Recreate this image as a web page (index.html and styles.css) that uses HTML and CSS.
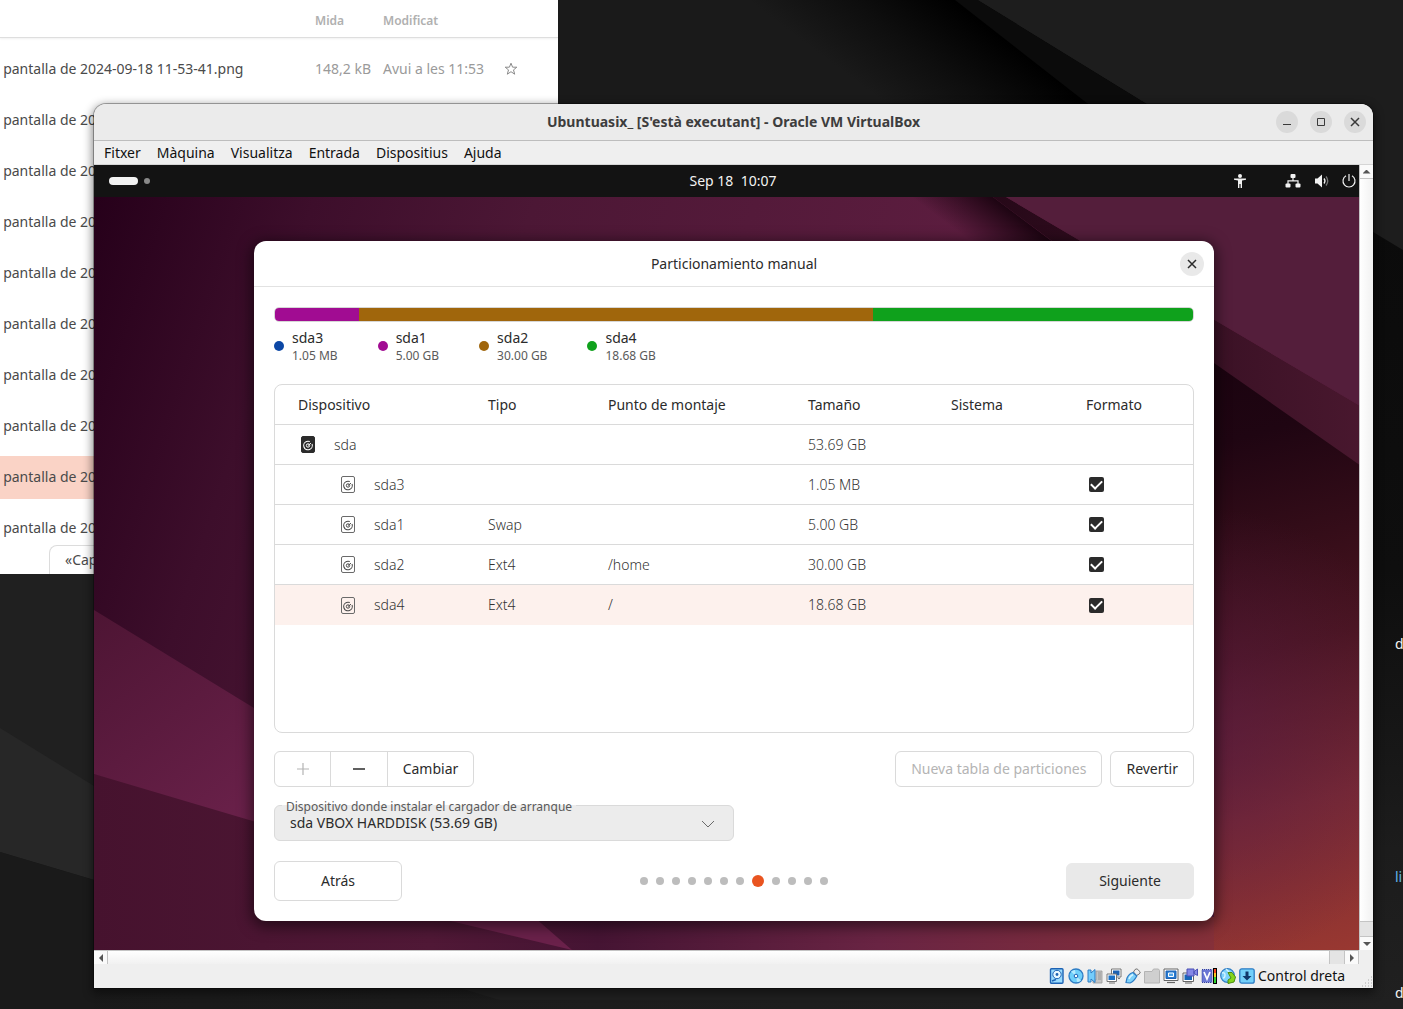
FILE: index.html
```html
<!DOCTYPE html>
<html lang="ca">
<head>
<meta charset="utf-8">
<title>Ubuntuasix_ - Oracle VM VirtualBox</title>
<link rel="stylesheet" href="styles.css">
</head>
<body>
<svg class="defs" aria-hidden="true">
  <symbol id="disk" viewBox="2 3 12 15">
    <circle cx="8" cy="11.500" r="4.300" fill="none" stroke="currentColor" stroke-width="1.100" stroke-dasharray="23 4" transform="rotate(-20 8 11.500)"/>
    <circle cx="8" cy="11.500" r="1.700" fill="none" stroke="currentColor"/>
    <path d="M8 11.500L11 9.200" stroke="currentColor"/>
  </symbol>
  <symbol id="close" viewBox="0 0 16 16"><path d="M4 4l8 8M12 4l-8 8" stroke="currentColor" stroke-width="1.500"/></symbol>
</svg>
<main class="desktop">
  <svg class="wallpaper" viewBox="0 0 1403 1009" preserveAspectRatio="none" aria-hidden="true">
    <defs>
      <linearGradient id="d1" gradientUnits="userSpaceOnUse" x1="947" y1="150" x2="1021" y2="52"><stop offset="0" stop-color="#1a1a1a"/><stop offset=".5" stop-color="#0e0e0e"/><stop offset="1" stop-color="#000"/></linearGradient>
      <linearGradient id="d2" x1="0" y1="0" x2="0" y2="1"><stop offset="0" stop-color="#0b0b0b"/><stop offset=".45" stop-color="#0e0e0e"/><stop offset=".8" stop-color="#1c1c1c"/><stop offset="1" stop-color="#202020"/></linearGradient>
      <linearGradient id="d3" x1="0" y1="0" x2="1" y2="0"><stop offset="0" stop-color="#191919"/><stop offset="1" stop-color="#202020"/></linearGradient>
    </defs>
    <rect width="1403" height="1009" fill="#202020"/>
    <path d="M558 0H978L1147 104H558z" fill="url(#d1)"/>
    <path d="M955 0H978L1147 104H1088z" fill="#0b0b0b"/>
    <path d="M978 0H1403V300L1147 104z" fill="#1d1d1d"/>
    <path d="M1340 212L1403 250V1009H1340z" fill="url(#d2)"/>
    <path d="M0 728L94 786V885H0z" fill="#272727"/>
    <path d="M0 852L500 1000H1403V1009H0z" fill="url(#d3)"/>
    <path d="M0 852L94 880V1009H0z" fill="#1a1a1a"/>
  </svg>

  <div class="desk-labels"><span>d</span><a class="link" href="#li">li</a><span>d</span></div>

  <section class="files">
    <div class="files-head"><span></span><span>Mida</span><span>Modificat</span></div>
    <ul class="files-list">
      <li><span class="name">Captura de pantalla de 2024-09-18 11-53-41.png</span><span class="dim">148,2 kB</span><span class="dim">Avui a les 11:53</span>
        <svg class="star" viewBox="0 0 14 14"><path d="M7 1.200l1.600 4h4.200L9.500 7.900l1.200 4.300L7 9.700l-3.700 2.500 1.200-4.300L1.200 5.200h4.200z" fill="none" stroke="#8a8a8a"/></svg></li>
      <li><span class="name">Captura de pantalla de 2024</span></li>
      <li><span class="name">Captura de pantalla de 2024</span></li>
      <li><span class="name">Captura de pantalla de 2024</span></li>
      <li><span class="name">Captura de pantalla de 2024</span></li>
      <li><span class="name">Captura de pantalla de 2024</span></li>
      <li><span class="name">Captura de pantalla de 2024</span></li>
      <li><span class="name">Captura de pantalla de 2024</span></li>
      <li class="picked"><span class="name">Captura de pantalla de 2024</span></li>
      <li><span class="name">Captura de pantalla de 2024</span></li>
    </ul>
    <div class="files-status">«Captura</div>
  </section>

  <section class="vm">
    <header class="vm-title">
      <h1>Ubuntuasix_ [S'està executant] - Oracle VM VirtualBox</h1>
      <div class="win-buttons">
        <button aria-label="Minimitza"><svg viewBox="0 0 16 16"><path d="M4 10.500h8" stroke="currentColor"/></svg></button>
        <button aria-label="Maximitza"><svg viewBox="0 0 16 16"><path d="M4.500 4.500h7v7h-7z" fill="none" stroke="currentColor"/></svg></button>
        <button aria-label="Tanca"><svg viewBox="0 0 16 16"><use href="#close"/></svg></button>
      </div>
    </header>
    <nav class="vm-menu"><a href="#f">Fitxer</a><a href="#m">Màquina</a><a href="#v">Visualitza</a><a href="#e">Entrada</a><a href="#d">Dispositius</a><a href="#a">Ajuda</a></nav>

    <div class="vm-view">
      <div class="guest-clip">
        <div class="guest">
          <div class="topbar">
            <div class="workspaces"><i class="pill"></i><i class="dot"></i></div>
            <time>Sep 18&nbsp; 10:07</time>
            <div class="tray">
              <svg class="a11y" viewBox="0 0 16 16" fill="#f2f2f2"><circle cx="8" cy="3" r="2"/><path d="M2 5.500h12v1.300l-4 .7V15H8.600v-4H7.400v4H6V7.500L2 6.800z"/></svg>
              <svg viewBox="0 0 16 16" fill="#f2f2f2"><rect x="5.500" y="1" width="5" height="4" rx="1"/><rect x=".5" y="10.500" width="5" height="4" rx="1"/><rect x="10.500" y="10.500" width="5" height="4" rx="1"/><path d="M8 5v3M3 11V7.800h10V11" fill="none" stroke="#f2f2f2" stroke-width="1.200"/></svg>
              <svg viewBox="0 0 16 16" fill="#f2f2f2"><path d="M2 5.500h2.500L9 1.500v13l-4.500-4H2z"/><path d="M11 5.500q2 2.500 0 5" fill="none" stroke="#f2f2f2" stroke-width="1.300"/><path d="M13 3.500q3.500 4.500 0 9" fill="none" stroke="#777" stroke-width="1.300"/></svg>
              <svg viewBox="0 0 16 16" fill="none" stroke="#f2f2f2" stroke-width="1.200"><path d="M5 2.800a6 6 0 1 0 6 0M8 1v7"/></svg>
            </div>
          </div>
          <div class="guest-desk">
            <svg class="wallpaper" viewBox="0 0 1280 753" preserveAspectRatio="none" aria-hidden="true">
              <defs>
                <linearGradient id="g1" gradientUnits="userSpaceOnUse" x1="0" y1="0" x2="800" y2="260"><stop offset="0" stop-color="#26001a"/><stop offset=".25" stop-color="#3d0e2b"/><stop offset=".5" stop-color="#4c1735"/><stop offset="1" stop-color="#5c1d3f"/></linearGradient>
                <linearGradient id="g2" gradientUnits="userSpaceOnUse" x1="900" y1="62" x2="930" y2="22"><stop offset="0" stop-color="#1c0411" stop-opacity="0"/><stop offset="1" stop-color="#1c0411"/></linearGradient>
                <linearGradient id="g3" gradientUnits="userSpaceOnUse" x1="1100" y1="150" x2="1265" y2="753"><stop offset="0" stop-color="#1a030f"/><stop offset=".16" stop-color="#1f0512"/><stop offset=".5" stop-color="#48141f"/><stop offset=".75" stop-color="#792a33"/><stop offset="1" stop-color="#993831"/></linearGradient>
                <linearGradient id="g4" gradientUnits="userSpaceOnUse" x1="0" y1="0" x2="1120" y2="0"><stop offset="0" stop-color="#46122e"/><stop offset=".3" stop-color="#501836"/><stop offset=".45" stop-color="#451433"/><stop offset=".7" stop-color="#692443"/><stop offset="1" stop-color="#853039"/></linearGradient>
                <linearGradient id="g5" gradientUnits="userSpaceOnUse" x1="0" y1="420" x2="160" y2="620"><stop offset="0" stop-color="#4e1534"/><stop offset="1" stop-color="#6a214a"/></linearGradient>
                <radialGradient id="g6" gradientUnits="userSpaceOnUse" cx="1110" cy="540" r="230"><stop offset="0" stop-color="#5a1c46" stop-opacity=".6"/><stop offset="1" stop-color="#5a1c46" stop-opacity="0"/></radialGradient>
                <linearGradient id="g7" x1="0" y1="0" x2="1" y2="0"><stop offset="0" stop-color="#260818"/><stop offset="1" stop-color="#4a182f"/></linearGradient>
              </defs>
              <rect width="1280" height="753" fill="url(#g1)"/>
              <path d="M0 577L600 720H1130V753H0z" fill="url(#g4)"/>
              <path d="M0 413L250 566V651L0 577z" fill="url(#g5)"/>
              <path d="M340 720H440L478 753z" fill="#6a214a"/>
              <path d="M780 0H899L1120 166H780z" fill="url(#g2)"/>
              <path d="M1120 150L1280 270V753H1120z" fill="url(#g3)"/>
              <path d="M1120 300H1280V753H1120z" fill="url(#g6)"/>
              <path d="M899 0H912L1280 217V278L1120 166L958 44z" fill="url(#g7)"/>
              <path d="M912 0H1280V217z" fill="#541e3b"/>
            </svg>

            <section class="dialog">
              <header class="dialog-head"><h2>Particionamiento manual</h2><button aria-label="Cerrar"><svg viewBox="0 0 16 16"><use href="#close"/></svg></button></header>
              <div class="dialog-body">
                <div class="usage"><i class="violet"></i><i class="brown"></i><i class="green"></i></div>
                <ul class="legend">
                  <li><i class="blue"></i><div><b>sda3</b><small>1.05 MB</small></div></li>
                  <li><i class="violet"></i><div><b>sda1</b><small>5.00 GB</small></div></li>
                  <li><i class="brown"></i><div><b>sda2</b><small>30.00 GB</small></div></li>
                  <li><i class="green"></i><div><b>sda4</b><small>18.68 GB</small></div></li>
                </ul>
                <div class="table-box">
                  <table>
                    <colgroup><col class="c-dev"><col class="c-type"><col class="c-mount"><col class="c-size"><col class="c-sys"><col></colgroup>
                    <thead><tr><th>Dispositivo</th><th>Tipo</th><th>Punto de montaje</th><th>Tamaño</th><th>Sistema</th><th>Formato</th></tr></thead>
                    <tbody>
                      <tr><td><div class="dev"><svg class="drive solid"><use href="#disk"/></svg>sda</div></td><td></td><td></td><td>53.69 GB</td><td></td><td></td></tr>
                      <tr><td><div class="dev child"><svg class="drive"><use href="#disk"/></svg>sda3</div></td><td></td><td></td><td>1.05 MB</td><td></td><td><input type="checkbox" checked aria-label="Formato sda3"></td></tr>
                      <tr><td><div class="dev child"><svg class="drive"><use href="#disk"/></svg>sda1</div></td><td>Swap</td><td></td><td>5.00 GB</td><td></td><td><input type="checkbox" checked aria-label="Formato sda1"></td></tr>
                      <tr><td><div class="dev child"><svg class="drive"><use href="#disk"/></svg>sda2</div></td><td>Ext4</td><td>/home</td><td>30.00 GB</td><td></td><td><input type="checkbox" checked aria-label="Formato sda2"></td></tr>
                      <tr class="current"><td><div class="dev child"><svg class="drive"><use href="#disk"/></svg>sda4</div></td><td>Ext4</td><td>/</td><td>18.68 GB</td><td></td><td><input type="checkbox" checked aria-label="Formato sda4"></td></tr>
                    </tbody>
                  </table>
                </div>
                <div class="actions">
                  <div class="group">
                    <button disabled aria-label="Añadir"><svg viewBox="0 0 16 16"><path d="M2 8h12M8 2v12" stroke="currentColor" stroke-width="1.200"/></svg></button>
                    <button aria-label="Quitar"><svg viewBox="0 0 16 16"><path d="M2 8h12" stroke="currentColor" stroke-width="1.500"/></svg></button>
                    <button>Cambiar</button>
                  </div>
                  <button class="btn push" disabled>Nueva tabla de particiones</button>
                  <button class="btn">Revertir</button>
                </div>
                <div class="field">
                  <label for="boot">Dispositivo donde instalar el cargador de arranque</label>
                  <select id="boot"><option>sda VBOX HARDDISK (53.69 GB)</option></select>
                  <svg class="chevron" viewBox="0 0 14 8"><path d="M1 1l6 6 6-6" fill="none" stroke="#6a6a6a"/></svg>
                </div>
                <footer class="dialog-foot">
                  <button class="btn wide">Atrás</button>
                  <div class="steps"><i></i><i></i><i></i><i></i><i></i><i></i><i></i><i class="on"></i><i></i><i></i><i></i><i></i></div>
                  <button class="btn wide next">Siguiente</button>
                </footer>
              </div>
            </section>
          </div>
        </div>
      </div>
      <div class="vscroll"><i class="arrow up"></i><i class="track"></i><i class="thumb"></i><i class="arrow down"></i></div>
      <div class="hscroll"><i class="arrow left"></i><i class="track"></i><i class="thumb"></i><i class="arrow right"></i></div>
    </div>

    <footer class="vm-status">
      <svg viewBox="0 0 16 16"><rect x="1.500" y=".8" width="12.500" height="14.400" rx="1" fill="#9adcff" stroke="#1d62b4" stroke-width="1.400"/><circle cx="8" cy="6.500" r="4.200" fill="#e8f8ff" stroke="#1d62b4"/><circle cx="8" cy="6.500" r="1.400" fill="#1d62b4"/><path d="M3 13l4-1.500" stroke="#1d62b4" stroke-width="1.600"/></svg>
      <svg viewBox="0 0 16 16"><circle cx="8" cy="8" r="7" fill="#6fd0fb" stroke="#2d7cc4" stroke-width="1.300"/><path d="M8 8L3 3.500A6 6 0 0 1 7 2zM8 8l5 4.500a6 6 0 0 1-4 1.500z" fill="#b5ebff"/><circle cx="8" cy="8" r="1.800" fill="#fff" stroke="#1d62b4"/></svg>
      <svg viewBox="0 0 16 16"><path d="M9 3h6v12H6v-3h3z" fill="#c4c4c4" stroke="#999" stroke-width=".8"/><path d="M11 5h3M11 7h3M11 9h3M11 11h3" stroke="#888" stroke-width=".7"/><path d="M1 2h3v3l4-3.500v13L4 11v3H1z" fill="#75cdfb" stroke="#2d7cc4"/></svg>
      <svg viewBox="0 0 16 16"><path d="M5.500 1h9.500v8H5.500z" fill="#fff" stroke="#777"/><path d="M7 2.500h6.500v5H7z" fill="#1d62b4"/><path d="M1 6h9.500v7.500H1z" fill="#fff" stroke="#777"/><path d="M2.500 7.500H9V12H2.500z" fill="#1d72c8"/><path d="M3 15h6M12 10.500h2" stroke="#777"/></svg>
      <svg viewBox="0 0 16 16"><path d="M10 1.500L12 .8 15.300 4l-1 2-2.800 1.500L8.500 4z" fill="#eee" stroke="#777"/><path d="M8 4.500L11.800 8Q9 13.500 5 15L1 14.500 2 10Q4 5.500 8 4.500z" fill="#7dd2fb" stroke="#2d7cc4" stroke-width="1.200"/><path d="M4 11q1-3 4-4.500" fill="none" stroke="#d8f5ff" stroke-width="1.500"/></svg>
      <svg viewBox="0 0 16 16"><path d="M.5 3.500L8 3.500 9.500 1h5l1 1.500V15H.5z" fill="#cfcfcf" stroke="#b4b4b4"/></svg>
      <svg viewBox="0 0 16 16"><path d="M1 1h14v11.500H1z" fill="#fff" stroke="#666"/><path d="M3 3h10v7.500H3z" fill="#2478cf" stroke="#1d62b4"/><path d="M5.500 5h5v3.500h-5z" fill="#4fa4ea" stroke="#fff"/><path d="M4 14.500h8" stroke="#666" stroke-width="1.200"/></svg>
      <svg viewBox="0 0 16 16"><path d="M1 5h10.500v8.500H1z" fill="#fff" stroke="#666"/><path d="M2.500 6.500H10V12H2.500z" fill="#1766b8"/><path d="M3 15h7" stroke="#666"/><path d="M5 1h7v7H5zM12 3.500L15.500 1v6.500L12 5.500z" fill="#8488e6" stroke="#4b4fb4"/></svg>
      <svg viewBox="0 0 16 16"><rect x="1" y="1.500" width="10" height="13" fill="#6a76d4"/><rect x="1" y="1.500" width="10" height="13" fill="none" stroke="#3341a0" stroke-dasharray="1 1"/><path d="M3 4l3 7 3-7" fill="none" stroke="#fff" stroke-width="1.700"/><path d="M12 0h4v16h-4z" fill="#000"/><path d="M13 1h2v4h-2z" fill="#f4471d"/><path d="M13 5h2v4h-2z" fill="#f7c81e"/><path d="M13 9h2v6h-2z" fill="#2ed32e"/></svg>
      <svg viewBox="0 0 16 16"><circle cx="7.500" cy="7.500" r="6.800" fill="#7dd2fb" stroke="#2d7cc4" stroke-width="1.200"/><path d="M2 5q3-1 3 2t-2 3M6 1l3 3" fill="none" stroke="#d5f3ff" stroke-width="1.400"/><path d="M8 4.500h4L15.500 9l-1.500 5-6 1.500V12l3-2z" fill="#83d51c" stroke="#4b8c10"/></svg>
      <svg viewBox="0 0 16 16"><rect x=".8" y=".8" width="14.400" height="14.400" rx="2" fill="#73d0fa" stroke="#2d7cc4" stroke-width="1.300"/><path d="M6.500 3.500h3V8h3L8 12.500 3.500 8h3z" fill="#10386b"/></svg>
      <span>Control dreta</span>
      <svg class="grip" viewBox="0 0 12 12"><path d="M10 1h1M7 4h1M10 4h1M4 7h1M7 7h1M10 7h1M1 10h1M4 10h1M7 10h1M10 10h1" stroke="#aaa"/></svg>
    </footer>
  </section>
</main>
</body>
</html>
```
FILE: styles.css
```css
* { box-sizing: border-box; }
body { margin: 0; background: #202020; font: 14px/20px "Noto Sans", "Open Sans", sans-serif; color: #2b2b2b; }
h1, h2, ul { margin: 0; padding: 0; list-style: none; }
button, select { font: inherit; color: inherit; margin: 0; padding: 0; border: 0; background: none; }
a { color: inherit; text-decoration: none; }
svg { display: block; }
.defs { position: absolute; width: 0; height: 0; }

.desktop { position: relative; height: 100vh; min-height: 600px; overflow: hidden; }
.wallpaper { position: absolute; inset: 0; width: 100%; height: 100%; }

.desk-labels { position: absolute; top: 634px; right: 0; width: 8px; overflow: hidden; color: #f2f2f2; display: grid; grid-template-rows: 233px 116px 20px; }
.desk-labels .link { color: #62b8e8; }

/* file manager behind the VM */
.files { position: absolute; left: 0; top: 0; width: 558px; height: 574px; overflow: hidden; background: #fff; color: #4a4a4a; }
.files-head, .files-list li { display: grid; grid-template-columns: 315px 68px 121px 16px; align-items: center; }
.files-head { height: 38px; padding-top: 4px; border-bottom: 1px solid #dedede; box-shadow: 0 1px 2px #0000000f; font-size: 12px; font-weight: 600; color: #b0b0b0; }
.files-list { display: grid; gap: 8px; padding-top: 10px; }
.files-list li { height: 43px; padding-bottom: 1px; white-space: nowrap; }
.files-list .picked { background: #fad3c6; }
.name { margin-left: -73px; }
.dim { color: #9a9a9a; }
.star { width: 14px; height: 14px; }
.files-status { position: absolute; left: 49px; bottom: 0; width: 500px; height: 29px; padding: 4px 15px; background: #fff; border: 1px solid #dcdcdc; border-bottom: 0; border-radius: 8px 8px 0 0; }

/* VirtualBox window */
.vm { position: absolute; left: 94px; top: 104px; right: 30px; bottom: 21px; display: flex; flex-direction: column; background: #efefef; border-radius: 12px 12px 0 0; overflow: hidden; box-shadow: 0 0 0 1px #0000004d, 0 3px 10px 2px #00000073; }
.vm-title { display: grid; grid-template-columns: 1fr auto 1fr; align-items: center; height: 37px; padding: 0 6px; background: #ebebeb; border-bottom: 1px solid #bdbdbd; }
.vm-title h1 { grid-column: 2; font-size: 14px; font-weight: 700; color: #3d3d3d; }
.win-buttons { display: flex; justify-content: flex-end; gap: 12px; color: #3a3a3a; padding-right: 1px; }
.win-buttons button, .dialog-head button { display: grid; place-items: center; width: 22px; height: 22px; border-radius: 50%; background: #dadada; }
.win-buttons svg, .dialog-head svg { width: 16px; height: 16px; }
.vm-menu { display: flex; gap: 16px; height: 24px; padding: 2px 10px; border-bottom: 1px solid #d5d5d5; color: #111; }
.vm-view { flex: 1; min-height: 0; display: grid; grid-template: minmax(0, 1fr) 14px / minmax(0, 1fr) 14px; }
.guest-clip { overflow: hidden; }
.guest { display: flex; flex-direction: column; width: calc(100% + 15px); height: 100%; }
.topbar { display: grid; grid-template-columns: 1fr auto 1fr; align-items: center; height: 32px; padding: 0 17px 0 15px; background: #131313; color: #f2f2f2; }
.workspaces { display: flex; align-items: center; gap: 6px; }
.pill { width: 29px; height: 8px; border-radius: 4px; background: #f2f2f2; }
.dot { width: 6px; height: 6px; border-radius: 3px; background: #8a8a8a; }
.tray { display: flex; justify-content: flex-end; gap: 12px; }
.tray svg { width: 16px; height: 16px; }
.tray .a11y { margin-right: 25px; }
.guest-desk { position: relative; flex: 1; padding: 44px 160px 29px; overflow: hidden; background: #4c1735; }

/* installer dialog */
.dialog { position: relative; height: 100%; display: flex; flex-direction: column; background: #fff; border-radius: 12px; box-shadow: 0 3px 14px 3px #00000080; }
.dialog-head { display: grid; grid-template-columns: 1fr auto 1fr; align-items: center; height: 46px; padding: 0 10px; border-bottom: 1px solid #e2e2e2; }
.dialog-head h2 { grid-column: 2; font-size: 14px; font-weight: 400; }
.dialog-head button { justify-self: end; width: 24px; height: 24px; background: #e9e9e9; }
.dialog-body { flex: 1; display: flex; flex-direction: column; padding: 20px; }
.usage { display: flex; height: 15px; border: 1px solid #d6d6d6; border-radius: 5px; overflow: hidden; }
.usage .violet { flex: 84; }
.usage .brown { flex: 514; }
.usage .green { flex: 320; }
.blue { background: #0c47a5; }
.violet { background: #a10c92; }
.brown { background: #a0660c; }
.green { background: #0fa11c; }
.legend { display: flex; gap: 40px; margin: 6px 0 20px; }
.legend li { display: flex; align-items: center; gap: 8px; }
.legend i { width: 10px; height: 10px; border-radius: 5px; }
.legend b, .legend small { display: block; font-weight: 400; }
.legend small { font-size: 12px; line-height: 16px; color: #5a5a5a; }
.table-box { flex: 1; border: 1px solid #dadada; border-radius: 8px; overflow: hidden; }
table { width: 100%; table-layout: fixed; border-collapse: separate; border-spacing: 0; }
.c-dev { width: 213px; }
.c-type { width: 120px; }
.c-mount { width: 200px; }
.c-size { width: 143px; }
.c-sys { width: 135px; }
th, td { height: 40px; padding: 0; text-align: left; font-weight: 400; border-bottom: 1px solid #dadada; }
td { font-weight: 300; color: #333; }
th:first-child { padding-left: 23px; }
.current td { border-bottom: 0; background: #fdf1ed; }
.dev { display: flex; align-items: center; gap: 19px; padding-left: 26px; }
.dev.child { padding-left: 66px; }
.drive { width: 14px; height: 17px; border: 1px solid #6a6a6a; border-radius: 2px; color: #4a4a4a; }
.drive.solid { background: #2b2b2b; border-color: #2b2b2b; color: #fff; }
input[type="checkbox"] { appearance: none; display: grid; place-items: center; width: 15px; height: 15px; margin: 0 0 0 3px; border-radius: 2px; background: #2b2b2b; }
input[type="checkbox"]::before { content: ""; width: 9px; height: 5px; margin-bottom: 3px; border: solid #fff; border-width: 0 0 2px 2px; transform: rotate(-45deg); }
.actions { display: flex; gap: 8px; margin: 18px 0; }
.group, .btn { height: 36px; border: 1px solid #dadada; border-radius: 6px; }
.group { display: flex; }
.group button { width: 55px; display: grid; place-items: center; }
.group button + button { width: 57px; border-left: 1px solid #dadada; }
.group button:last-child { width: 86px; }
.group svg { width: 16px; height: 16px; }
button:disabled { color: #b4b4b4; }
.btn { padding: 0 15px; }
.push { margin-left: auto; }
.field { position: relative; width: 50%; }
.field select { display: block; appearance: none; width: 100%; height: 36px; padding: 0 15px; background: #ececec; border: 1px solid #dadada; border-radius: 6px; }
.field label { position: absolute; left: 8px; top: -6px; padding: 0 4px; font-size: 12px; line-height: 16px; color: #5a5a5a; background: linear-gradient(#fff 6px, #ececec 6px); }
.chevron { position: absolute; right: 19px; top: 15px; width: 14px; height: 8px; }
.dialog-foot { display: flex; align-items: center; justify-content: space-between; margin-top: 20px; }
.wide { width: 128px; height: 40px; }
.next { height: 36px; background: #e9e9e9; border-color: #e9e9e9; }
.steps { display: flex; align-items: center; gap: 8px; }
.steps i { width: 8px; height: 8px; border-radius: 50%; background: #bdbdbd; }
.steps .on { width: 12px; height: 12px; background: #e95420; }

/* scroll bars */
.vscroll, .hscroll { display: flex; background: #efefef; }
.vscroll { flex-direction: column; border-left: 1px solid #c4c4c4; }
.hscroll { border-top: 1px solid #c4c4c4; border-right: 1px solid #c4c4c4; }
.track { flex: 1; }
.vscroll .track { background: linear-gradient(90deg, #fff, #f1f1f1); border: solid #c4c4c4; border-width: 1px 0; }
.hscroll .track { background: linear-gradient(#fff, #f1f1f1); border: solid #c4c4c4; border-width: 0 1px; }
.thumb { background: #e4e4e4; }
.vscroll .thumb { height: 15px; border-bottom: 1px solid #c4c4c4; }
.hscroll .thumb { width: 15px; border-right: 1px solid #c4c4c4; }
.arrow { width: 13px; height: 13px; display: grid; place-items: center; background: #fafafa; }
.arrow::before { content: ""; width: 8px; height: 4px; background: #555; clip-path: polygon(50% 0, 100% 100%, 0 100%); }
.down::before { transform: rotate(180deg); }
.left::before { transform: rotate(-90deg); }
.right::before { transform: rotate(90deg); }

.vm-status { display: flex; align-items: center; justify-content: flex-end; gap: 3px; height: 24px; color: #111; }
.vm-status svg { width: 16px; height: 16px; }
.vm-status span { min-width: 91px; }
.vm-status .grip { align-self: flex-end; width: 12px; height: 12px; margin-left: 9px; }
```
